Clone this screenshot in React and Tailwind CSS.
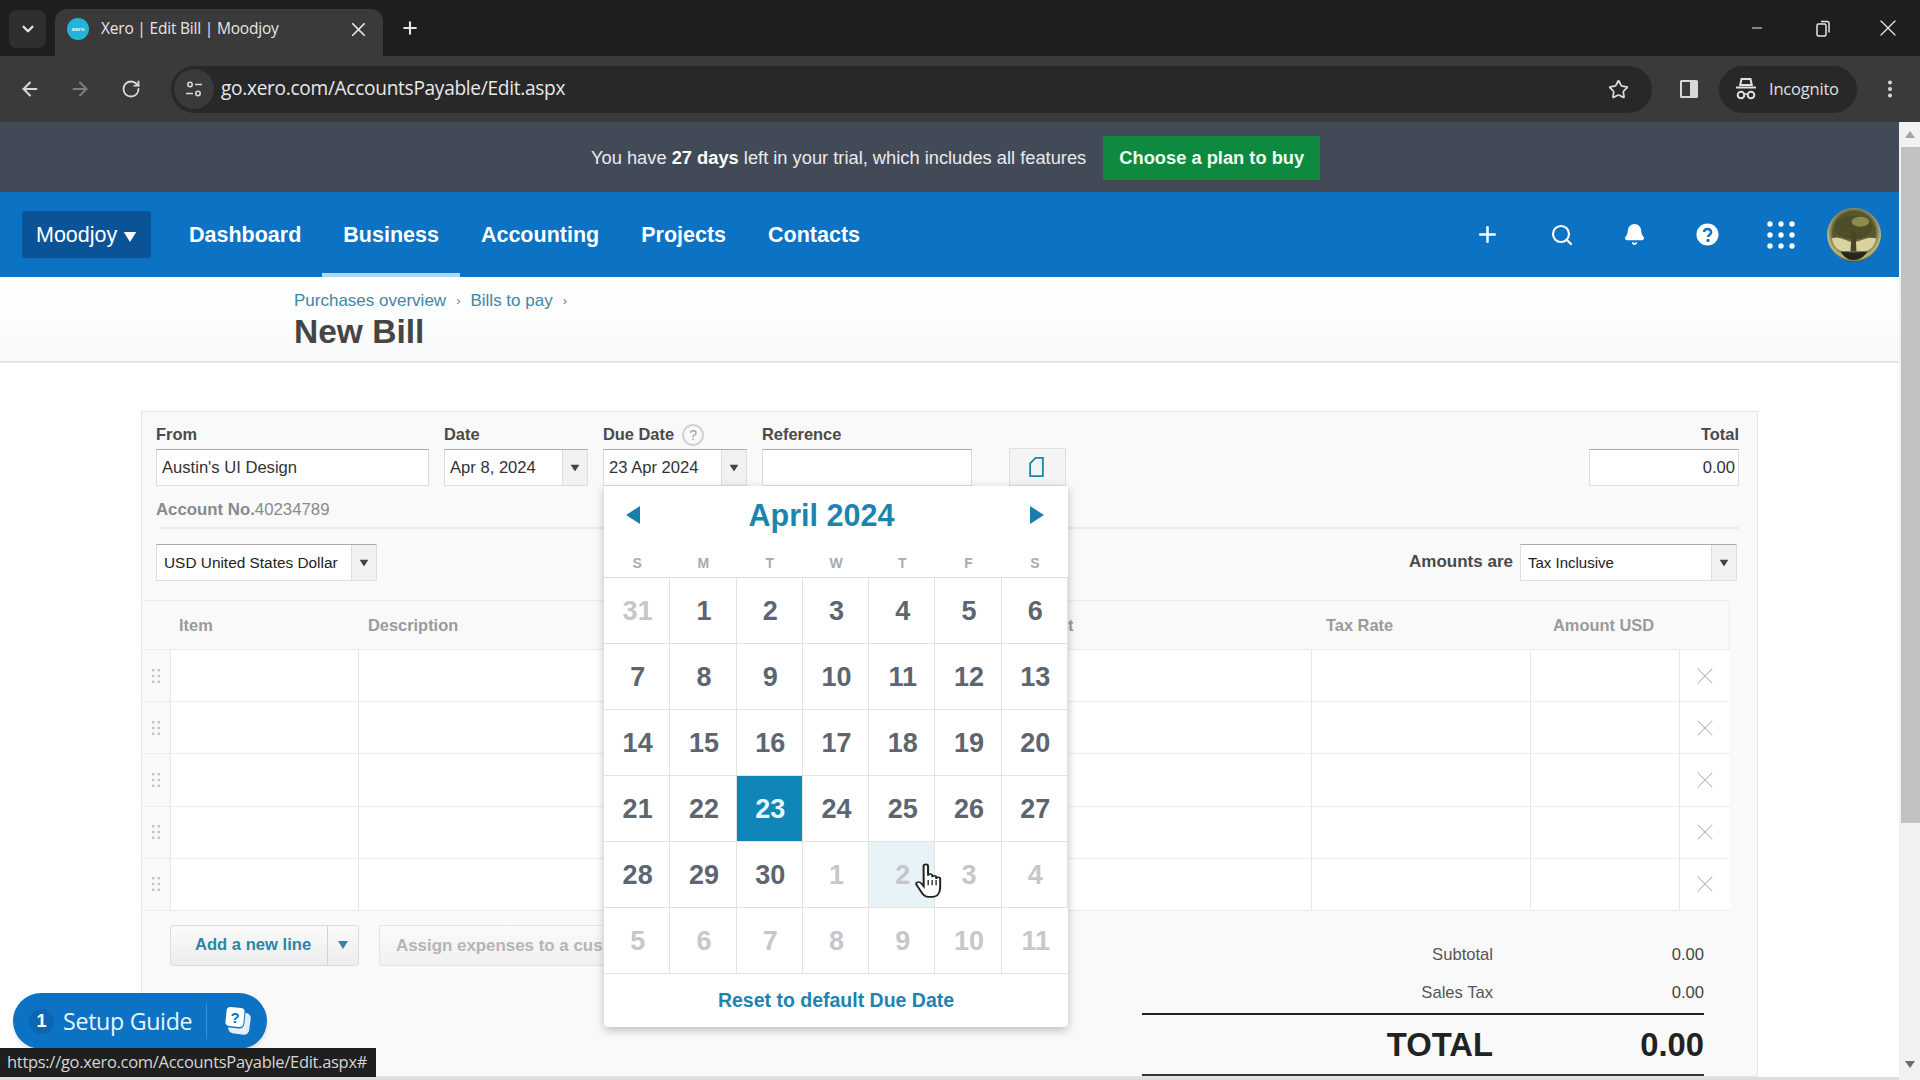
import React from "react"
import { ArrowLeft, ArrowRight, RotateCw, Star, ChevronDown, X, Plus, Minus, EllipsisVertical, Search, Bell } from "lucide-react"

const weekdays = ["S", "M", "T", "W", "T", "F", "S"]
const days = [
	[31, 1, 2, 3, 4, 5, 6],
	[7, 8, 9, 10, 11, 12, 13],
	[14, 15, 16, 17, 18, 19, 20],
	[21, 22, 23, 24, 25, 26, 27],
	[28, 29, 30, 1, 2, 3, 4],
	[5, 6, 7, 8, 9, 10, 11],
]

const Caret = ({ className = "" }) => (
	<svg width="10" height="8" viewBox="0 0 10 8" className={className}>
		<path d="M0 0h10L5 8z" fill="currentColor" />
	</svg>
)

const TabStrip = () => (
	<div className="flex h-[56px] items-end bg-[#1e1e1e] pl-[9px] text-[#e6e6e6]">
		<div className="mb-[8px] flex h-[38px] w-[37px] items-center justify-center rounded-lg bg-[#2f2f2f]">
			<ChevronDown size={18} strokeWidth={3} />
		</div>
		<div className="ml-[9px] flex h-[47px] w-[328px] items-center rounded-t-xl bg-[#3a3a3a] pb-[7px] pl-[12px] pr-[13px]">
			<div className="flex h-[22px] w-[22px] items-center justify-center rounded-full bg-[#22b5d8] text-[6px] font-bold text-white">xero</div>
			<span className="ml-[12px] font-['Open_Sans',sans-serif] text-[15.5px] tracking-[-0.2px]">Xero | Edit Bill | Moodjoy</span>
			<X size={23} strokeWidth={1.8} className="ml-auto" />
		</div>
		<Plus size={20} strokeWidth={2.5} className="mb-[18px] ml-[17px]" />
		<div className="mb-[14px] ml-auto flex items-center">
			<Minus size={16} strokeWidth={1.5} className="mr-[50px]" />
			<svg width="16" height="18" viewBox="0 0 16 18" fill="none" stroke="currentColor" strokeWidth="1.5" className="mr-[43px]">
				<rect x="2" y="5" width="9" height="12" rx="1.500" />
				<path d="M6 2.500h6a2 2 0 0 1 2 2v9" />
			</svg>
			<X size={28} strokeWidth={1.1} className="mr-[18px]" />
		</div>
	</div>
)

const Toolbar = () => (
	<div className="flex h-[66px] items-center bg-[#3a3a3a] text-[#d8d8d8]">
		<ArrowLeft size={22} strokeWidth={2.2} className="ml-[19px]" />
		<ArrowRight size={22} strokeWidth={2.2} className="ml-[28px] text-[#7d7d7d]" />
		<RotateCw size={20} strokeWidth={2.2} className="ml-[30px]" />
		<div className="ml-[30px] flex h-[47px] w-[1481px] items-center rounded-full bg-[#282828]">
			<div className="ml-[3px] flex h-[40px] w-[40px] items-center justify-center rounded-full bg-[#3a3a3a]">
				<svg width="18" height="18" viewBox="0 0 18 18" fill="none" stroke="currentColor" strokeWidth="1.6">
					<circle cx="5" cy="4.500" r="2.200" />
					<path d="M10 4.500h7M1 13.500h7" />
					<circle cx="13" cy="13.500" r="2.200" />
				</svg>
			</div>
			<span className="ml-[7px] pb-[1px] font-['Open_Sans',sans-serif] text-[19.1px] tracking-[-0.3px] text-[#e8e8e8]">go.xero.com/AccountsPayable/Edit.aspx</span>
			<Star size={21} strokeWidth={2} className="ml-auto mr-[23px]" />
		</div>
		<svg width="20" height="20" viewBox="0 0 20 20" className="ml-[27px]">
			<path d="M1 2.500A1.500 1.500 0 0 1 2.500 1h15A1.500 1.500 0 0 1 19 2.500v15a1.500 1.500 0 0 1-1.500 1.500h-15A1.500 1.500 0 0 1 1 17.500z" fill="#d8d8d8" />
			<rect x="3" y="3" width="8" height="14" fill="#3a3a3a" />
		</svg>
		<div className="ml-[20px] flex h-[47px] w-[138px] items-center rounded-full bg-[#282828] pl-[16px]">
			<svg width="22" height="24" viewBox="0 0 22 24">
				<path d="M6.500 2h9l1.300 6H5.200z" fill="none" stroke="#e0e0e0" strokeWidth="2" />
				<rect x="1" y="9.500" width="20" height="2" fill="#e0e0e0" />
				<circle cx="6" cy="18" r="3.300" fill="none" stroke="#e0e0e0" strokeWidth="2" />
				<circle cx="16" cy="18" r="3.300" fill="none" stroke="#e0e0e0" strokeWidth="2" />
				<path d="M9.300 17h3.400" stroke="#e0e0e0" strokeWidth="1.500" />
			</svg>
			<span className="ml-[12px] font-['Open_Sans',sans-serif] text-[16.5px] tracking-[-0.2px] text-[#e0e0e0]">Incognito</span>
		</div>
		<EllipsisVertical size={22} strokeWidth={2.4} className="ml-[22px]" />
	</div>
)

const TrialBanner = () => (
	<div className="flex h-[70px] items-center bg-[#434a57] pl-[591px] pt-[2px]">
		<span className="text-[18.3px] text-[#e9ebee]">You have <b className="text-white">27 days</b> left in your trial, which includes all features</span>
		<div className="ml-[17px] flex h-[44px] w-[217px] items-center justify-center bg-[#0e8a40] text-[18.3px] font-bold text-[#eefff2]">Choose a plan to buy</div>
	</div>
)

const NavBar = () => (
	<div className="flex h-[85px] items-center bg-[#0b72c4] text-white">
		<div className="ml-[22px] flex h-[47px] w-[129px] items-center rounded-[3px] bg-[#0a5396] pl-[14px] pt-[2px] text-[21.5px]">
			Moodjoy
			<Caret className="ml-[8px] mt-[2px] scale-125" />
		</div>
		<div className="ml-[17px] flex h-full items-stretch text-[21.5px] font-bold">
			{["Dashboard", "Business", "Accounting", "Projects", "Contacts"].map((item) => (
				<div key={item} className={item === "Business" ? "flex items-center border-b-[4px] border-[#b5d8ee] px-[21px] pt-[6px]" : "flex items-center px-[21px] pt-[2px]"}>
					{item}
				</div>
			))}
		</div>
		<div className="ml-auto flex items-center pr-[18px]">
			<Plus size={25} strokeWidth={2.4} />
			<Search size={24} strokeWidth={2.2} className="ml-[50px]" />
			<Bell size={23} strokeWidth={2} fill="white" className="ml-[49px]" />
			<svg width="23" height="23" viewBox="0 0 24 24" className="ml-[50px]">
				<circle cx="12" cy="12" r="11.500" fill="white" />
				<path d="M8.300 9.300a3.800 3.800 0 0 1 7.500.3c0 2.600-3 2.800-3.200 5" fill="none" stroke="#0b72c4" strokeWidth="2.600" />
				<circle cx="12.500" cy="18.200" r="1.700" fill="#0b72c4" />
			</svg>
			<svg width="30" height="30" viewBox="0 0 30 30" fill="white" className="ml-[47px]">
				<circle cx="4" cy="4" r="2.700" /><circle cx="15" cy="4" r="2.700" /><circle cx="26" cy="4" r="2.700" />
				<circle cx="4" cy="15" r="2.700" /><circle cx="15" cy="15" r="2.700" /><circle cx="26" cy="15" r="2.700" />
				<circle cx="4" cy="26" r="2.700" /><circle cx="15" cy="26" r="2.700" /><circle cx="26" cy="26" r="2.700" />
			</svg>
			<svg width="54" height="54" viewBox="0 0 55 55" className="ml-[31px]">
				<defs>
					<radialGradient id="sky" cx="50%" cy="45%" r="55%">
						<stop offset="0%" stopColor="#77733f" />
						<stop offset="70%" stopColor="#55532c" />
						<stop offset="90%" stopColor="#c2bd82" />
						<stop offset="100%" stopColor="#3b4a34" />
					</radialGradient>
				</defs>
				<circle cx="27.500" cy="27.500" r="27.500" fill="url(#sky)" />
				<ellipse cx="27" cy="20" rx="19" ry="12" fill="#4e4d29" />
				<ellipse cx="34" cy="14" rx="9" ry="5" fill="#8c8a4c" />
				<path d="M5 31c6-3 12 1 18 3h8c6-2 13-5 19-3-1 7-5 11-10 13H15C10 42 6 38 5 31z" fill="#d8d3a0" />
				<path d="M25 24h4l1 20h-6z" fill="#4a4326" />
				<path d="M14 44c8 2 19 2 27 0-3 6-8 9-14 9s-10-3-13-9z" fill="#23261f" />
			</svg>
		</div>
	</div>
)

const PageHeader = () => (
	<div className="h-[86px] border-b-[2px] border-[#e4e5e6] bg-gradient-to-b from-white to-[#f8f9fa] pl-[294px] pt-[14px]">
		<div className="flex h-[20px] items-center text-[17px] text-[#3d87a8]">
			<span>Purchases overview</span>
			<span className="mx-[10px] text-[13px] text-[#6d8a98]">›</span>
			<span>Bills to pay</span>
			<span className="ml-[10px] text-[13px] text-[#6d8a98]">›</span>
		</div>
		<div className="text-[33.5px] font-bold leading-[42px] text-[#454545]">New Bill</div>
	</div>
)

const Label = ({ children, className = "" }) => (
	<div className={`flex h-[25px] items-start text-[16.4px] font-bold leading-[20px] text-[#4a4a4a] ${className}`}>{children}</div>
)

const TextBox = ({ children, className = "" }) => (
	<div className={`flex h-[37px] items-center border border-[#dedede] border-t-[#aaaaaa] bg-white pl-[5px] pt-[2px] text-[16.6px] text-[#333333] ${className}`}>{children}</div>
)

const Select = ({ children, arrow = "w-[25px]", className = "" }) => (
	<div className={`flex h-[37px] items-stretch border border-[#dedede] border-t-[#aaaaaa] bg-white text-[#333333] ${className}`}>
		<div className="flex min-w-0 flex-1 items-center pl-[5px] pt-[2px]">{children}</div>
		<div className={`flex items-center justify-center border-l border-[#dddddd] bg-[#f1f1f1] text-[#444444] ${arrow}`}>
			<Caret className="scale-90" />
		</div>
	</div>
)

const HandCursor = () => (
	<svg width="29" height="36" viewBox="0 0 22 34" preserveAspectRatio="none" fill="white" stroke="#222222" strokeWidth="1.500" className="absolute left-[311px] top-[377px]">
		<path d="M6.500 3a1.700 1.700 0 0 1 3.400 0v9a1.600 1.600 0 0 1 3.200 0v1.500a1.500 1.500 0 0 1 3 0V15a1.500 1.500 0 0 1 3 0v8c0 5-2 9-6 9h-3c-3 0-4.500-3-6-6l-3-5.500c-1-2.500 2-3.500 3.500-1.500l2 3z" />
		<path d="M10 16v5M13 16v5M16 16v5" strokeWidth="1" />
	</svg>
)

const CalendarPopup = () => (
	<div className="absolute left-[1px] top-[62px] z-10 w-[464px] rounded-b-[4px] bg-white shadow-[0_3px_10px_rgba(0,0,0,0.25)]">
		<div className="flex h-[60px] items-center justify-between pl-[22px] pr-[24px] text-[#1a7fa8]">
			<svg width="14" height="18" viewBox="0 0 14 18" className="mb-[2px]"><path d="M14 0v18L0 9z" fill="currentColor" /></svg>
			<span className="mr-[27px] text-[30.5px] font-bold text-[#1c84ae]">April 2024</span>
			<svg width="14" height="18" viewBox="0 0 14 18" className="mb-[2px]"><path d="M0 0v18l14-9z" fill="currentColor" /></svg>
		</div>
		<div className="grid h-[32px] grid-cols-7 items-center border-b border-[#dcdcdc] pt-[4px] text-center text-[14px] font-bold text-[#a8abae]">
			{weekdays.map((d, i) => (
				<span key={i}>{d}</span>
			))}
		</div>
		<div className="grid grid-cols-7">
			{days.map((week, r) =>
				week.map((d, c) => {
					const outer = (r === 0 && d > 7) || (r === 4 && c > 2) || r === 5
					let cell = "text-[#5c6570]"
					if (outer) cell = "text-[#c5c8cb]"
					if (r === 3 && d === 23) cell = "bg-[#0f85b8] text-[#e4f7ff]"
					if (r === 4 && c === 4) cell = "bg-[#e8f3f8] text-[#c5c8cb]"
					return (
						<div key={`${r}-${c}`} className={`flex h-[66px] items-center justify-center border-b border-r border-[#e2e2e2] pl-[2px] pt-[2px] text-[27px] font-bold last:border-r-0 ${cell}`}>
							{d}
						</div>
					)
				})
			)}
		</div>
		<div className="flex h-[53px] items-center justify-center pt-[1px] text-[19.5px] font-bold text-[#1c84ae]">Reset to default Due Date</div>
		<HandCursor />
	</div>
)

const DragDots = () => (
	<svg width="10" height="16" viewBox="0 0 10 16" fill="#c4c4c4">
		<rect x="1" y="1" width="2.400" height="2.400" /><rect x="6.600" y="1" width="2.400" height="2.400" />
		<rect x="1" y="6.800" width="2.400" height="2.400" /><rect x="6.600" y="6.800" width="2.400" height="2.400" />
		<rect x="1" y="12.600" width="2.400" height="2.400" /><rect x="6.600" y="12.600" width="2.400" height="2.400" />
	</svg>
)

const LinesTable = () => (
	<div className="mr-[27px] border-r border-[#ececec]">
		<div className="grid h-[50px] grid-cols-[28px_188px_600px_353px_219px_149px_51px] items-center border-y border-[#ececec] bg-[#f9f9f9] text-[16.4px] font-bold text-[#9b9b9b]">
			<span />
			<span className="pl-[9px]">Item</span>
			<span className="pl-[10px]">Description</span>
			{/* only the tail of "Account" shows past the open calendar */}
			<span className="pl-[110px]">t</span>
			<span className="pl-[15px]">Tax Rate</span>
			<span className="pl-[23px]">Amount USD</span>
			<span />
		</div>
		{[0, 1, 2, 3, 4].map((row) => (
			<div key={row} className="grid h-[52.2px] grid-cols-[28px_188px_600px_353px_219px_149px_51px] border-b border-[#ececec]">
				<div className="flex items-center justify-center bg-[#f9f9f9]"><DragDots /></div>
				<div className="border-l border-[#e6e6e6] bg-white" />
				<div className="border-l border-[#e6e6e6] bg-white" />
				<div className="bg-white" />
				<div className="border-l border-[#e6e6e6] bg-white" />
				<div className="border-l border-[#e6e6e6] bg-white" />
				<div className="flex items-center justify-center border-l border-[#e6e6e6] bg-white">
					<X size={28} strokeWidth={0.9} className="text-[#b0b0b0]" />
				</div>
			</div>
		))}
	</div>
)

const Totals = () => (
	<div className="mr-[53px] w-[562px] pt-[29px]">
		<div className="grid h-[32px] grid-cols-[351px_211px] items-center text-right text-[16.6px] text-[#555555]">
			<span>Subtotal</span><span className="text-[#444444]">0.00</span>
		</div>
		<div className="mt-[6px] grid h-[32px] grid-cols-[351px_211px] items-center text-right text-[16.6px] text-[#555555]">
			<span>Sales Tax</span><span className="text-[#444444]">0.00</span>
		</div>
		<div className="mt-[3px] border-t-[2px] border-[#222222]" />
		<div className="grid h-[59px] grid-cols-[351px_211px] items-center text-right text-[32.8px] font-bold text-[#222222]">
			<span>TOTAL</span><span>0.00</span>
		</div>
		<div className="border-t-[2px] border-[#333333]" />
	</div>
)

const BillForm = () => (
	<div className="ml-[141px] mt-[48px] w-[1617px] border border-[#e6e6e6] bg-[#f9f9f9]">
		<div className="flex pl-[14px] pr-[18px] pt-[12px]">
			<div className="w-[273px]">
				<Label>From</Label>
				<TextBox>Austin's UI Design</TextBox>
			</div>
			<div className="ml-[15px] w-[144px]">
				<Label>Date</Label>
				<Select><span className="text-[16.6px]">Apr 8, 2024</span></Select>
			</div>
			<div className="relative ml-[15px] w-[144px]">
				<Label>
					Due Date
					<span className="ml-[8px] flex h-[22px] w-[22px] items-center justify-center rounded-full border-2 border-[#cfd3d6] text-[14px] font-normal text-[#9aa0a5]">?</span>
				</Label>
				<Select><span className="text-[16.6px]">23 Apr 2024</span></Select>
				<CalendarPopup />
			</div>
			<div className="ml-[15px] w-[210px]">
				<Label>Reference</Label>
				<TextBox />
			</div>
			<div className="ml-[37px] mt-[24px] flex h-[38px] w-[57px] items-center justify-center border border-[#e0e0e0] bg-[#f4f4f4] pr-[2px] text-[#1c84ae]">
				<svg width="15" height="20" viewBox="0 0 16 22" fill="none" stroke="currentColor" strokeWidth="2">
					<path d="M7 1h8v20H1V7z" />
				</svg>
			</div>
			<div className="ml-auto w-[150px]">
				<Label className="justify-end">Total</Label>
				<TextBox className="justify-end pr-[3px]">0.00</TextBox>
			</div>
		</div>
		<div className="mx-[18px] flex h-[43px] items-end border-b-[2px] border-[#eaeaea] pb-[5px] text-[16.8px] text-[#8a8a8a]">
			<span className="-ml-[4px]"><b>Account No.</b>40234789</span>
		</div>
		<div className="flex items-center pl-[14px] pr-[20px] pt-[15px]">
			<Select className="w-[221px]"><span className="-mt-[2px] pl-[2px] text-[15.4px] text-[#222222]">USD United States Dollar</span></Select>
			<span className="ml-auto mr-[7px] -mt-[2px] text-[17px] font-bold text-[#4a4a4a]">Amounts are</span>
			<Select className="w-[217px]"><span className="pl-[2px] text-[15px] text-[#222222]">Tax Inclusive</span></Select>
		</div>
		<div className="mt-[19px]">
			<LinesTable />
		</div>
		<div className="flex items-start justify-between pl-[28px]">
			<div className="mt-[14px] flex">
				<div className="flex h-[41px] w-[189px] items-stretch rounded-[3px] border border-[#dcdcdc] bg-gradient-to-b from-[#fafafa] to-[#ededed] text-[#2d84a8]">
					<div className="flex flex-1 items-center pl-[24px] text-[16.6px] font-bold">Add a new line</div>
					<div className="flex w-[31px] items-center justify-center border-l border-[#d2d2d2]"><Caret /></div>
				</div>
				<div className="ml-[20px] flex h-[41px] w-[224px] items-center overflow-hidden whitespace-nowrap rounded-l-[3px] border border-r-0 border-[#e4e4e4] bg-gradient-to-b from-[#fbfbfb] to-[#f0f0f0] pl-[16px] text-[16.9px] font-bold text-[#b5b5b5]">Assign expenses to a cus</div>
			</div>
			<Totals />
		</div>
	</div>
)

const Scrollbar = () => (
	<div className="flex w-[21px] flex-col items-center bg-[#f1f1f1] text-[#6b6b6b]">
		<svg width="10" height="7" viewBox="0 0 10 7" className="mt-[9px]"><path d="M0 7h10L5 0z" fill="#a3a3a3" /></svg>
		<div className="ml-[2px] mt-[9px] h-[676px] w-[19px] bg-[#c1c1c1]" />
		<svg width="10" height="7" viewBox="0 0 10 7" className="mt-auto mb-[12px]"><path d="M0 0h10L5 7z" fill="currentColor" /></svg>
	</div>
)

const SetupGuide = () => (
	<div className="absolute bottom-[31px] left-[13px] flex h-[56px] w-[254px] items-center rounded-full bg-[#0b72c4] text-[#e8f5ff] shadow-md">
		<span className="ml-[16px] flex h-[25px] w-[25px] items-center justify-center rounded-full bg-[#0d66b2] text-[18px] font-bold text-white">1</span>
		<span className="ml-[9px] font-['Open_Sans',sans-serif] text-[23.2px] tracking-[-0.3px]">Setup Guide</span>
		<div className="ml-[14px] h-[36px] border-l border-[#3e8fd0]" />
		<svg width="32" height="32" viewBox="0 0 32 32" className="ml-[14px]">
			<rect x="8" y="7" width="21" height="22" rx="5" fill="#e3effa" transform="rotate(8 18 18)" />
			<rect x="3" y="1" width="21" height="22" rx="5" fill="#0b72c4" transform="rotate(6 14 12)" />
			<rect x="5" y="2.500" width="18" height="19" rx="4" fill="white" transform="rotate(6 14 12)" />
			<text x="14" y="18" textAnchor="middle" fontSize="15" fontWeight="700" fontFamily="Liberation Sans, sans-serif" fill="#0b72c4">?</text>
		</svg>
	</div>
)

const App = () => {
	return (
		<div className="relative h-[1080px] w-[1920px] overflow-hidden bg-white font-['Liberation_Sans',Arial,sans-serif]">
			<TabStrip />
			<Toolbar />
			<div className="flex h-[958px]">
				<div className="min-w-0 flex-1 overflow-hidden">
					<TrialBanner />
					<NavBar />
					<PageHeader />
					<BillForm />
				</div>
				<Scrollbar />
			</div>
			<SetupGuide />
			<div className="absolute bottom-[3px] left-0 flex h-[29px] w-[376px] items-center bg-[#1f1f1f] pl-[7px] font-['Open_Sans',sans-serif] text-[16.5px] tracking-[-0.3px] text-[#d6d6d6]">https://go.xero.com/AccountsPayable/Edit.aspx#</div>
			<div className="absolute bottom-0 left-0 h-[3px] w-[1899px] bg-[#dedede]" />
		</div>
	)
}

export default App
